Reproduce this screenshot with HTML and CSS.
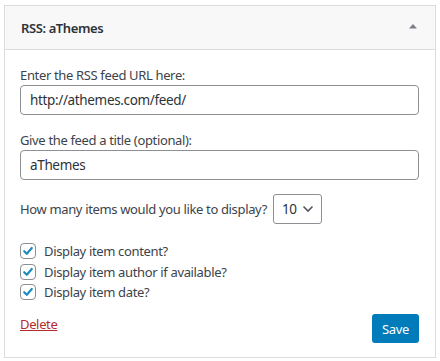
FILE: index.html
```html
<!DOCTYPE html>
<html>
<head>
<meta charset="UTF-8">
<title>RSS widget</title>
<link rel="stylesheet" href="styles.css">
</head>
<body>

<div class="widget">
  <div class="widget-top">
    <h3 class="widget-title">RSS: aThemes</h3>
    <svg class="toggle" width="10" height="6" viewBox="0 0 10 6"><path d="M1 5.5 L5 1 L9 5.5 Z" fill="#7a7f84"/></svg>
  </div>

  <div class="widget-inside">
    <p class="field">
      <label>Enter the RSS feed URL here:</label>
      <span class="text-input">http://athemes.com/feed/</span>
    </p>
    <p class="field">
      <label>Give the feed a title (optional):</label>
      <span class="text-input">aThemes</span>
    </p>
    <p class="count-row">
      <label>How many items would you like to display?</label>
      <span class="select-box">10
        <svg width="12" height="8" viewBox="0 0 12 8"><path d="M1.5 1.5 L6 6 L10.5 1.5" fill="none" stroke="#50575e" stroke-width="1.6"/></svg>
      </span>
    </p>
    <div class="checks">
      <div class="check-row">
        <span class="checkbox"><svg width="12" height="12" viewBox="0 0 12 12"><path d="M2.2 6.2 L4.8 8.8 L9.8 3" fill="none" stroke="#1e8cbe" stroke-width="2.2" stroke-linecap="round" stroke-linejoin="round"/></svg></span>
        Display item content?
      </div>
      <div class="check-row">
        <span class="checkbox"><svg width="12" height="12" viewBox="0 0 12 12"><path d="M2.2 6.2 L4.8 8.8 L9.8 3" fill="none" stroke="#1e8cbe" stroke-width="2.2" stroke-linecap="round" stroke-linejoin="round"/></svg></span>
        Display item author if available?
      </div>
      <div class="check-row">
        <span class="checkbox"><svg width="12" height="12" viewBox="0 0 12 12"><path d="M2.2 6.2 L4.8 8.8 L9.8 3" fill="none" stroke="#1e8cbe" stroke-width="2.2" stroke-linecap="round" stroke-linejoin="round"/></svg></span>
        Display item date?
      </div>
    </div>
    <div class="widget-control-actions">
      <a class="delete-link" href="#">Delete</a>
      <button class="save-btn">Save</button>
    </div>
  </div>
</div>

</body>
</html>
```

FILE: styles.css
```css
/* page */
body {
  margin: 0;
  background-color: #ffffff;
  color: #3c434a;
  font-family: "Noto Sans", "Open Sans", sans-serif;
  font-size: 13px;
  letter-spacing: -0.35px;
}

/* the widget box */
.widget {
  margin: 5px 4px 0 4px;
  width: 432px;
  height: 353px;
  box-sizing: border-box;
  border: 1px solid #dcdcde;
  display: flex;
  flex-direction: column;
}

.widget-top {
  height: 43px;
  background-color: #f8f8f8;
  border-bottom: 1px solid #dcdcde;
  display: flex;
  align-items: center;
  justify-content: space-between;
  padding: 0 17px 0 16px;
}

.widget-title {
  margin: 0;
  font-size: 13px;
  font-weight: 600;
  color: #2c3338;
  letter-spacing: -0.4px;
}

.toggle {
  margin-top: -3px;
}

.widget-inside {
  padding: 16px 16px 14px 15px;
  display: flex;
  flex-direction: column;
  flex: 1;
}

/* fields */
.field {
  margin: 0 0 16px 0;
  display: flex;
  flex-direction: column;
}

.field label {
  line-height: 19px;
}

.text-input {
  height: 30px;
  box-sizing: border-box;
  border: 1px solid #8c8f94;
  border-radius: 4px;
  padding: 0 9px;
  display: flex;
  align-items: center;
  color: #2c3338;
  font-size: 13.5px;
}

.count-row {
  margin: -2px 0 17px 0;
  display: flex;
  align-items: center;
  gap: 6px;
}

.select-box {
  width: 49px;
  height: 30px;
  box-sizing: border-box;
  border: 1px solid #8c8f94;
  border-radius: 3px;
  display: flex;
  align-items: center;
  justify-content: space-between;
  padding: 0 7px 0 8px;
  color: #2c3338;
  font-size: 13.5px;
}

/* checkboxes */
.checks {
  display: flex;
  flex-direction: column;
}

.check-row {
  height: 20.5px;
  display: flex;
  align-items: center;
  gap: 8px;
}

.checkbox {
  width: 16px;
  height: 16px;
  box-sizing: border-box;
  border: 1px solid #8c8f94;
  border-radius: 4px;
  display: flex;
  align-items: center;
  justify-content: center;
}

/* footer */
.widget-control-actions {
  margin-top: auto;
  display: flex;
  justify-content: space-between;
  align-items: center;
}

.delete-link {
  color: #b32d2e;
  text-decoration: underline;
  margin-top: -10px;
}

.save-btn {
  width: 47px;
  height: 29px;
  border: none;
  border-radius: 3px;
  background-color: #007cba;
  color: #ffffff;
  font-family: "Noto Sans", "Open Sans", sans-serif;
  font-size: 13px;
  letter-spacing: -0.3px;
  padding: 0;
}
```
